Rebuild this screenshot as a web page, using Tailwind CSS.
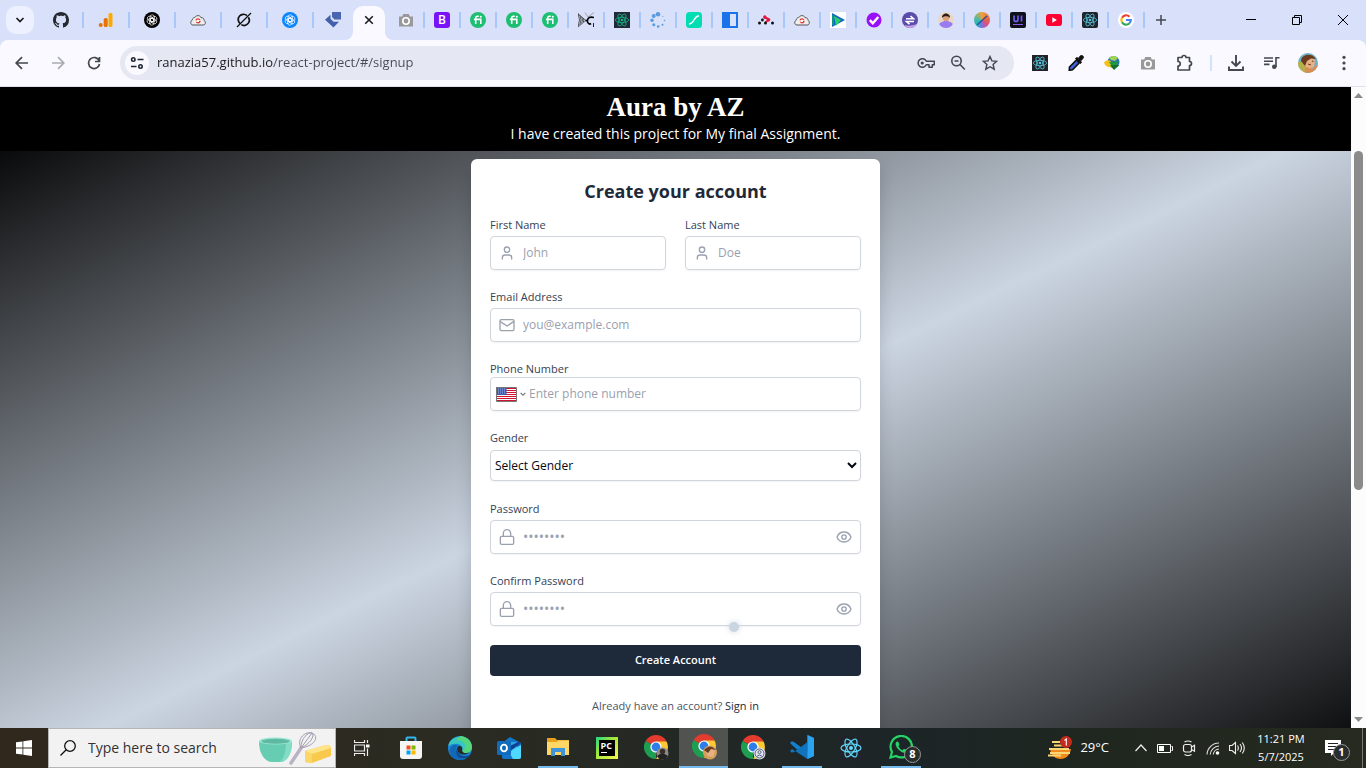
<!DOCTYPE html>
<html lang="en">
<head>
<meta charset="utf-8">
<title>Aura by AZ – Sign up</title>
<script src="https://cdn.jsdelivr.net/npm/@tailwindcss/browser@4"></script>
</head>
<body class="flex h-screen flex-col overflow-hidden bg-white font-['Open_Sans','Noto_Sans',sans-serif]">

<svg class="hidden" aria-hidden="true">
  <symbol id="react" viewBox="0 0 24 24"><g fill="none" stroke="currentColor" stroke-width="1.2"><ellipse cx="12" cy="12" rx="10" ry="4"/><ellipse cx="12" cy="12" rx="10" ry="4" transform="rotate(60 12 12)"/><ellipse cx="12" cy="12" rx="10" ry="4" transform="rotate(120 12 12)"/></g><circle cx="12" cy="12" r="2" fill="currentColor"/></symbol>
  <symbol id="fiverr" viewBox="0 0 16 16"><circle cx="8" cy="8" r="8" fill="#1dbf73"/><path d="M8.800 4.300H7.600C6.300 4.300 5.700 5 5.700 6.200V12M3.900 7.400h6.900V12" fill="none" stroke="#fff" stroke-width="1.600"/><circle cx="10.800" cy="4.700" r="1" fill="#fff"/></symbol>
  <symbol id="cloud" viewBox="0 0 16 16"><path d="M3 13C.3 13 .1 9.400 2 8.400 2.500 5.600 4.600 5.400 5 5.400 6 3 10.200 3 11 5.600c2-.2 3 1.200 3 2.800 2 1 1.800 4.600-.8 4.600z" fill="#eee" stroke="#555" stroke-width="1"/><circle cx="8" cy="8.800" r="2" fill="#fff" stroke="#e0362c" stroke-width="1.300" stroke-dasharray="4.500 1.500"/></symbol>
  <symbol id="camera" viewBox="0 0 16 16"><path d="M1 4.500h3.200L5.200 2h5.600l1 2.500H15V14.500H1z" fill="#999"/><circle cx="8" cy="9" r="3.200" fill="#999" stroke="#fff" stroke-width="1.600"/></symbol>
  <symbol id="openai" viewBox="0 0 16 16"><g fill="none" stroke="#fff" stroke-width=".7"><rect x="6" y="2.800" width="4.400" height="6.800" rx="2.200"/><rect x="6" y="2.800" width="4.400" height="6.800" rx="2.200" transform="rotate(60 8 8)"/><rect x="6" y="2.800" width="4.400" height="6.800" rx="2.200" transform="rotate(120 8 8)"/><rect x="6" y="2.800" width="4.400" height="6.800" rx="2.200" transform="rotate(180 8 8)"/><rect x="6" y="2.800" width="4.400" height="6.800" rx="2.200" transform="rotate(240 8 8)"/><rect x="6" y="2.800" width="4.400" height="6.800" rx="2.200" transform="rotate(300 8 8)"/></g></symbol>
  <symbol id="chrome" viewBox="0 0 24 24"><path d="M12 12 1.600 6A12 12 0 0 1 22.400 6z" fill="#e33b2e"/><path d="M12 12V24A12 12 0 0 1 1.600 6z" fill="#1e9e50"/><path d="M12 6.500h10.600A12 12 0 0 1 12 24l4.800-9z" fill="#fcc934"/><circle cx="12" cy="12" r="5.600" fill="#fff"/><circle cx="12" cy="12" r="4.400" fill="#2f7de9"/></symbol>
  <symbol id="user" viewBox="0 0 24 24"><path d="M19 21v-2a4 4 0 0 0-4-4H9a4 4 0 0 0-4 4v2" fill="none" stroke="currentColor" stroke-width="2" stroke-linecap="round"/><circle cx="12" cy="7" r="4" fill="none" stroke="currentColor" stroke-width="2"/></symbol>
  <symbol id="mail" viewBox="0 0 24 24"><g fill="none" stroke="currentColor" stroke-width="2" stroke-linejoin="round"><rect x="1.500" y="4" width="21" height="16.500" rx="2"/><path d="m1.500 6.500 10.500 7 10.500-7"/></g></symbol>
  <symbol id="lock" viewBox="0 0 24 24"><g fill="none" stroke="currentColor" stroke-width="2" stroke-linejoin="round"><rect x="2" y="11" width="20" height="12" rx="2"/><path d="M6.500 11V6.500a5.500 5.500 0 0 1 11 0V11"/></g></symbol>
  <symbol id="eye" viewBox="0 0 24 24"><g fill="none" stroke="currentColor" stroke-width="2"><path d="M1.500 12C3.500 7 7.500 4.500 12 4.500S20.500 7 22.500 12C20.500 17 16.500 19.500 12 19.500S3.500 17 1.500 12z"/><circle cx="12" cy="12" r="3.300"/></g></symbol>
</svg>

<!-- Tab strip -->
<div class="flex h-10 shrink-0 items-center bg-[#d9e0f9]">
  <button aria-label="Search tabs" class="ml-1.5 mr-[3px] flex size-7 items-center justify-center rounded-[10px] bg-[#edf0ff]"><svg class="size-3" viewBox="0 0 12 12"><path d="m2.500 4 3.500 3.500L9.500 4" fill="none" stroke="#1b1b1f" stroke-width="1.700"/></svg></button>
  <div class="flex h-full items-center">
    <button aria-label="GitHub" class="flex h-4 w-[47px] items-center justify-center border-r-2 border-[#a8c7fa] pl-0.5"><svg class="size-4" viewBox="0 0 16 16"><path fill="#24292f" d="M8 0C3.580 0 0 3.580 0 8c0 3.540 2.290 6.530 5.470 7.590.4.070.55-.17.55-.38 0-.19-.01-.82-.01-1.490-2.010.37-2.530-.49-2.690-.94-.09-.23-.48-.94-.82-1.130-.28-.15-.68-.52-.01-.53.63-.01 1.080.58 1.230.82.72 1.210 1.870.87 2.330.66.070-.52.280-.87.510-1.070-1.780-.2-3.640-.89-3.640-3.950 0-.87.310-1.590.82-2.150-.08-.2-.36-1.020.08-2.120 0 0 .67-.21 2.200.82.640-.18 1.320-.27 2-.27s1.360.09 2 .27c1.530-1.040 2.200-.82 2.200-.82.440 1.100.160 1.920.08 2.120.510.56.82 1.270.82 2.150 0 3.070-1.870 3.750-3.650 3.950.290.250.540.730.540 1.480 0 1.070-.01 1.930-.01 2.200 0 .210.150.460.550.380A8 8 0 0 0 16 8c0-4.420-3.580-8-8-8"/></svg></button>
    <button aria-label="Analytics" class="flex h-4 w-[46px] items-center justify-center border-r-2 border-[#a8c7fa]"><svg class="size-4" viewBox="0 0 16 16"><rect x="10.500" y="1" width="4" height="14" rx="1.600" fill="#f9ab00"/><rect x="5.700" y="6" width="4" height="9" rx="1.600" fill="#e8710a"/><circle cx="2.700" cy="13" r="2" fill="#e8710a"/></svg></button>
    <button aria-label="ChatGPT" class="flex h-4 w-[46px] items-center justify-center border-r-2 border-[#a8c7fa]"><svg class="size-4 rounded-full bg-black"><use href="#openai"/></svg></button>
    <button aria-label="Cloud convert" class="flex h-4 w-[46px] items-center justify-center border-r-2 border-[#a8c7fa]"><svg class="size-4"><use href="#cloud"/></svg></button>
    <button aria-label="Grok" class="flex h-4 w-[46px] items-center justify-center border-r-2 border-[#a8c7fa]"><svg class="size-4" viewBox="0 0 16 16"><g fill="none" stroke="#111" stroke-width="1.700"><path d="M4 11.500A5.200 5.200 0 0 1 11 3.600M12.300 5.200A5.200 5.200 0 0 1 5.300 12.600"/><path d="M1 15 15 1" stroke-width="1.200"/></g></svg></button>
    <button aria-label="AI chat" class="flex h-4 w-[46px] items-center justify-center border-r-2 border-[#a8c7fa]"><svg class="size-4 rounded-full bg-[#0a84ff]"><use href="#openai"/></svg></button>
    <button aria-label="Design tool" class="flex h-4 w-[39px] items-center justify-center pr-0.5"><svg class="size-4" viewBox="0 0 16 16"><path d="M7 0h9v7.500H9.500L7 5z" fill="#4a66b0"/><path d="M5.500 2.800v4l3 3h5.500L8.500 15.500 0 7.800z" fill="#4460ad"/></svg></button>
  </div>
  <div class="flex h-full items-end">
    <svg class="-ml-2 size-2" viewBox="0 0 8 8"><path d="M0 8A8 8 0 0 0 8 0V8z" fill="#faf9ff"/></svg>
    <button aria-label="Close active tab" class="flex h-[34px] w-8 items-center justify-center rounded-t-[10px] bg-[#faf9ff] pb-1.5"><svg class="size-2.5" viewBox="0 0 10 10"><path d="m1.200 1.200 7.600 7.600M8.800 1.200 1.200 8.800" stroke="#1b1b1f" stroke-width="1.600"/></svg></button>
    <svg class="-mr-2 size-2" viewBox="0 0 8 8"><path d="M8 8A8 8 0 0 1 0 0V8z" fill="#faf9ff"/></svg>
  </div>
  <div class="ml-1 flex h-full items-center">
    <button aria-label="Screenshot" class="flex h-4 w-9 items-center justify-center border-r-2 border-[#a8c7fa]"><svg class="size-4"><use href="#camera"/></svg></button>
    <button aria-label="Bootstrap" class="flex h-4 w-9 items-center justify-center border-r-2 border-[#a8c7fa]"><span class="flex size-4 items-center justify-center rounded-[3px] bg-[#7a12f9] text-xs font-semibold text-white">B</span></button>
    <button aria-label="Fiverr" class="flex h-4 w-9 items-center justify-center border-r-2 border-[#a8c7fa]"><svg class="size-4"><use href="#fiverr"/></svg></button>
    <button aria-label="Fiverr" class="flex h-4 w-9 items-center justify-center border-r-2 border-[#a8c7fa]"><svg class="size-4"><use href="#fiverr"/></svg></button>
    <button aria-label="Fiverr" class="flex h-4 w-9 items-center justify-center border-r-2 border-[#a8c7fa]"><svg class="size-4"><use href="#fiverr"/></svg></button>
    <button aria-label="Canvas" class="flex h-4 w-9 items-center justify-center border-r-2 border-[#a8c7fa]"><svg class="size-4" viewBox="0 0 16 16"><g fill="none" stroke="#333"><path d="M0 1q3 7 0 14M1.800 2.800q2.400 5.200 0 10.400M3.600 4.500q1.800 3.500 0 7M5.400 6q1 2 0 4" stroke-width=".8"/><path d="M0 2 8 8.500 0 15" stroke-width=".6"/><path d="M7 .5 10 5 16 .5" stroke="#888" stroke-width=".7"/><path d="M16 5.500c-4-1-6 0-6.500 2.500S11 13 13 11.500M16 11v4M7.500 8.500h2" stroke="#000" stroke-width="1.700"/></g></svg></button>
    <button aria-label="React" class="flex h-4 w-9 items-center justify-center border-r-2 border-[#a8c7fa]"><svg class="size-4 bg-[#242938] text-[#12b886]"><use href="#react"/></svg></button>
    <button aria-label="Loading" class="flex h-4 w-9 items-center justify-center border-r-2 border-[#a8c7fa]"><svg class="size-4" viewBox="0 0 16 16" fill="#5b9be0"><circle cx="8" cy="2.300" r="2.300"/><circle cx="3.700" cy="4" r="2"/><circle cx="2" cy="8.300" r="1.700"/><circle cx="3.800" cy="12.800" r="1.500"/><circle cx="8.200" cy="14.500" r="1.300"/><circle cx="12.500" cy="12.800" r="1"/><circle cx="14.500" cy="8.500" r=".8"/><circle cx="12.800" cy="4.300" r=".6"/></svg></button>
    <button aria-label="Lottie" class="flex h-4 w-9 items-center justify-center border-r-2 border-[#a8c7fa]"><svg class="size-4" viewBox="0 0 16 16"><rect width="16" height="16" rx="3.500" fill="#00ddb3"/><path d="M3.500 12C8 12 8 4 12.500 4" fill="none" stroke="#fff" stroke-width="1.500" stroke-linecap="round"/></svg></button>
    <button aria-label="Layout" class="flex h-4 w-9 items-center justify-center border-r-2 border-[#a8c7fa]"><svg class="size-4" viewBox="0 0 16 16"><path d="M0 0h16v16H0z" fill="#1a73e8"/><path d="M8 2h6v12H8z" fill="#d9e0f9"/></svg></button>
    <button aria-label="React Router" class="flex h-4 w-9 items-center justify-center border-r-2 border-[#a8c7fa]"><svg class="size-4" viewBox="0 0 16 16"><path d="M6 5.200 9.500 6.500 10 8.500 7.500 10" fill="none" stroke="#e8123c" stroke-width="2"/><circle cx="6.800" cy="5" r="1.700" fill="#e8123c"/><circle cx="10.600" cy="7.800" r="1.700" fill="#e8123c"/><g fill="#111"><circle cx="4.400" cy="8" r="1.400"/><circle cx="1.500" cy="11" r="1.500"/><circle cx="7.500" cy="11" r="1.500"/><circle cx="14.500" cy="11" r="1.500"/></g></svg></button>
    <button aria-label="Cloud convert" class="flex h-4 w-9 items-center justify-center border-r-2 border-[#a8c7fa]"><svg class="size-4"><use href="#cloud"/></svg></button>
    <button aria-label="Player" class="flex h-4 w-9 items-center justify-center border-r-2 border-[#a8c7fa]"><svg class="size-4" viewBox="0 0 16 16"><path d="M0 0h16v16H0z" fill="#fff"/><path d="m2 1 13 7L2 15z" fill="#1763c6"/><path d="m4 4 7 4-5 6z" fill="#25d366"/><path d="M3 3v10" stroke="#0d9488" stroke-width="2"/></svg></button>
    <button aria-label="Tasks" class="flex h-4 w-9 items-center justify-center border-r-2 border-[#a8c7fa]"><svg class="size-4" viewBox="0 0 16 16"><circle cx="8" cy="8" r="7.500" fill="#9810fa"/><path d="m3.800 8.200 3 3 5.500-6.200" fill="none" stroke="#fff" stroke-width="2.400"/></svg></button>
    <button aria-label="Converter" class="flex h-4 w-9 items-center justify-center border-r-2 border-[#a8c7fa]"><svg class="size-4" viewBox="0 0 16 16"><circle cx="8" cy="8" r="8" fill="#5b4bab"/><path d="M2 13A8 8 0 0 0 15 12Q8 15 2 13" fill="#c9a2e8"/><path d="M4 6.700h7.500L8.500 4M12 9.500H4.500l3 2.700" fill="none" stroke="#fff" stroke-width="1.600"/></svg></button>
    <button aria-label="Portfolio" class="flex h-4 w-9 items-center justify-center border-r-2 border-[#a8c7fa]"><svg class="size-4 rounded-full" viewBox="0 0 16 16"><path d="M0 0h16v16H0z" fill="#e8d8c8"/><path d="M0 16c0-5 4-7 8-7s8 2 8 7z" fill="#9b7cf0"/><circle cx="8" cy="5.800" r="3.400" fill="#d9a27c"/><path d="M4 6C3.500 0 12.500 0 12 6 11 3.500 5 3.500 4 6" fill="#2b1d18"/></svg></button>
    <button aria-label="Palette" class="flex h-4 w-9 items-center justify-center border-r-2 border-[#a8c7fa]"><span class="flex size-4 items-center justify-center rounded-full bg-[conic-gradient(#f0a03a,#e8604a_25%,#d8508a_38%,#7b6fe0_50%,#1db7c4_65%,#5bb89a_80%,#f0a03a)]"><svg class="size-3" viewBox="0 0 12 12"><path d="M1 11 11 2" stroke="#3b4a8a" stroke-width="1.300"/></svg></span></button>
    <button aria-label="UI kit" class="flex h-4 w-9 items-center justify-center border-r-2 border-[#a8c7fa]"><svg class="size-4" viewBox="0 0 16 16"><rect width="16" height="16" rx="2" fill="#101018"/><path d="M4 3.500v4q0 2 2 2t2-2v-4M11.500 3.500v6" fill="none" stroke="#6d5df0" stroke-width="1.700"/><path d="M3 12.500h10" stroke="#8a5cf0"/></svg></button>
    <button aria-label="YouTube" class="flex h-4 w-9 items-center justify-center border-r-2 border-[#a8c7fa]"><svg class="size-4" viewBox="0 0 16 16"><rect y="2" width="16" height="12" rx="3" fill="#ff0033"/><path d="m6.300 5.300 4.600 2.700-4.600 2.700z" fill="#fff"/></svg></button>
    <button aria-label="React" class="flex h-4 w-9 items-center justify-center border-r-2 border-[#a8c7fa]"><svg class="size-4 rounded-[2px] bg-[#20232a] text-[#58c4dc]"><use href="#react"/></svg></button>
    <button aria-label="Google" class="flex h-4 w-9 items-center justify-center border-r-2 border-[#a8c7fa]"><svg class="size-4" viewBox="0 0 16 16"><circle cx="8" cy="8" r="8" fill="#fff"/><g fill="none" stroke-width="2.200"><path d="M4 5.700A4.700 4.700 0 0 1 11.500 4.700" stroke="#ea4335"/><path d="M4 10.300a4.700 4.700 0 0 1 0-4.600" stroke="#fbbc04"/><path d="M11.200 11.500A4.700 4.700 0 0 1 4 10.300" stroke="#34a853"/><path d="M8 8h4.800a4.700 4.700 0 0 1-1.600 3.500" stroke="#4285f4"/></g></svg></button>
  </div>
  <button aria-label="New tab" class="flex w-8 items-center justify-center"><svg class="size-2.5" viewBox="0 0 10 10"><path d="M5 0v10M0 5h10" stroke="#44474f" stroke-width="1.500"/></svg></button>
  <div class="ml-auto flex">
    <button aria-label="Minimize" class="flex w-[46px] justify-center"><svg class="size-2.5" viewBox="0 0 10 10"><path d="M0 4.500h10" stroke="#000"/></svg></button>
    <button aria-label="Restore" class="flex w-[46px] justify-center"><svg class="size-2.5" viewBox="0 0 10 10"><path d="M.5 2.500h7v7h-7zM2.500 2.500v-2h7v7h-2" fill="none" stroke="#000"/></svg></button>
    <button aria-label="Close" class="flex w-[46px] justify-center"><svg class="size-2.5" viewBox="0 0 10 10"><path d="m0 0 10 10M10 0 0 10" stroke="#000"/></svg></button>
  </div>
</div>

<!-- Toolbar -->
<div class="shrink-0 bg-[#d9e0f9]">
<div class="flex h-[47px] items-center rounded-t-lg border-b border-[#dfe0ea] bg-[#faf9ff] px-1">
  <button aria-label="Back" class="flex w-9 justify-center"><svg class="size-3.5" viewBox="0 0 14 14"><path d="M13 7H1.500M7 1.200 1.200 7 7 12.800" fill="none" stroke="#44474f" stroke-width="1.700"/></svg></button>
  <button aria-label="Forward" class="flex w-9 justify-center"><svg class="size-3.5" viewBox="0 0 14 14"><path d="M1 7h11.500M7 1.200 12.800 7 7 12.800" fill="none" stroke="#a9abb3" stroke-width="1.700"/></svg></button>
  <button aria-label="Reload" class="flex w-9 justify-center"><svg class="size-3.5" viewBox="0 0 14 14"><path d="M12.200 5A5.500 5.500 0 1 0 12.500 8M12.500 1v4.500H8" fill="none" stroke="#44474f" stroke-width="1.700"/></svg></button>
  <div class="ml-2 flex h-[34px] min-w-0 flex-1 items-center rounded-full bg-[#e5e8f3] pl-[5px] pr-2">
    <button aria-label="Site information" class="flex size-6 items-center justify-center rounded-full bg-[#faf9ff]"><svg class="size-3.5" viewBox="0 0 14 14"><g fill="none" stroke="#1f2430" stroke-width="1.600"><circle cx="3.300" cy="3.500" r="1.700"/><path d="M7.500 3.500h6M1 10.500h5.500"/><circle cx="10.500" cy="10.500" r="1.700"/></g></svg></button>
    <input type="text" aria-label="Address" value="ranazia57.github.io/react-project/#/signup" class="ml-2 min-w-0 flex-1 bg-[linear-gradient(to_right,#1b1b1f_116px,#474a54_116px)] bg-clip-text text-[13px] text-transparent outline-none">
    <button aria-label="Passwords" class="flex w-8 justify-center"><svg class="h-3 w-[18px]" viewBox="0 0 18 12"><g fill="none" stroke="#44474f" stroke-width="1.500"><path d="M9.300 4.200A4.300 4.300 0 1 0 9.300 7.800H12v2.400h3.300V7.800h2V4.200z" stroke-linejoin="round"/></g><circle cx="5.200" cy="6" r="1.600" fill="#44474f"/></svg></button>
    <button aria-label="Zoom" class="flex w-8 justify-center"><svg class="size-4" viewBox="0 0 16 16"><g fill="none" stroke="#44474f" stroke-width="1.600"><circle cx="6.500" cy="6" r="4.700"/><path d="m10 9.500 4.800 5M4.500 6h4"/></g></svg></button>
    <button aria-label="Bookmark" class="flex w-8 justify-center"><svg class="size-4" viewBox="0 0 16 16"><path d="m8 1.500 1.900 4.400 4.800.4-3.600 3.200 1.100 4.700L8 11.700l-4.200 2.500 1.100-4.700L1.300 6.300l4.800-.4z" fill="none" stroke="#44474f" stroke-width="1.400"/></svg></button>
  </div>
  <div class="ml-2 flex items-center">
    <button aria-label="React developer tools" class="flex w-9 justify-center"><svg class="size-4 bg-[#20232a] text-[#58c4dc]"><use href="#react"/></svg></button>
    <button aria-label="Colour picker" class="flex w-9 justify-center"><svg class="size-4" viewBox="0 0 16 16"><path d="m8.500 5 2.800 2.800L4.500 14.800 1.300 15.300 1.500 12z" fill="#3c66e0" stroke="#111" stroke-width="1.700"/><path d="M7.500 3.500 9 2.500l1.300 1L12 1.200C14-.8 16.500 1.500 14.800 3.800L12.500 6l1 1.500-1.200 1z" fill="#111" stroke="#111"/></svg></button>
    <button aria-label="Download manager" class="flex w-9 justify-center"><svg class="size-4" viewBox="0 0 16 16"><circle cx="9.500" cy="7" r="6" fill="#2f6fb5"/><path d="M5 3c3-3 7-2 9 0l-3 3-4-1z" fill="#9fd356"/><path d="M0 7.500c2-2.500 5-3 7-1l1 5.500c-4 1-7-1-8-4.500" fill="#f2c21a"/><path d="m5 7 10-.5L9.500 14z" fill="#1c9a3d"/><path d="m6 10 4 5 5.500-5z" fill="#14702c"/></svg></button>
    <button aria-label="Screenshot" class="flex w-9 justify-center"><svg class="size-4"><use href="#camera"/></svg></button>
    <button aria-label="Extensions" class="flex w-9 justify-center"><svg class="size-[18px]" viewBox="0 0 18 18"><path d="M3 3.500H7a2 2 0 0 1 4 0H14.500V7.500a2 2 0 0 1 0 4V16H3v-4a2.200 2.200 0 0 0 0-4.500z" fill="none" stroke="#44474f" stroke-width="1.700" stroke-linejoin="round"/></svg></button>
    <span class="ml-2 mr-1.5 h-4 w-0.5 bg-[#d3e3fd]"></span>
    <button aria-label="Downloads" class="flex w-9 justify-center"><svg class="size-[18px]" viewBox="0 0 18 18"><path d="M9 1v10.500M4.500 7.500 9 12l4.500-4.500M2 12.500V16h14v-3.500" fill="none" stroke="#44474f" stroke-width="1.900"/></svg></button>
    <button aria-label="Media" class="flex w-9 justify-center"><svg class="size-4" viewBox="0 0 16 16"><path d="M0 3h9M0 6.200h9M0 9.400h5.500M12 12V2.800h3.500" fill="none" stroke="#44474f" stroke-width="1.600"/><circle cx="10.300" cy="11.700" r="2.300" fill="#44474f"/></svg></button>
    <button aria-label="Profile" class="flex w-9 justify-center"><svg class="size-5 rounded-full" viewBox="0 0 20 20"><path d="M0 0h20v20H0z" fill="#6fb1c7"/><path d="M0 9l6-1 6 12H0z" fill="#b7b04a"/><path d="M5 9c1-6 11-6 12-1l-1 6-6 3z" fill="#e8b184"/><path d="M3 8C3 1 14-1 18 6L13 5.500 9 8 7 13z" fill="#6b3b1f"/><path d="M8 14l6 2 6-5v9H6z" fill="#d88d52"/><path d="m10 11 3 1M14 8l1.500.5" stroke="#6b3b1f"/></svg></button>
    <button aria-label="Menu" class="flex w-9 justify-center"><svg class="size-4" viewBox="0 0 16 16" fill="#44474f"><circle cx="8" cy="2.300" r="1.600"/><circle cx="8" cy="8" r="1.600"/><circle cx="8" cy="13.700" r="1.600"/></svg></button>
  </div>
</div>
</div>

<!-- Page -->
<div class="flex min-h-0 flex-1">
  <div class="flex min-w-0 flex-1 flex-col">
    <header class="flex h-16 shrink-0 flex-col items-center bg-black pt-1 text-white">
      <h1 class="font-['Georgia','Liberation_Serif',serif] text-[27px] leading-8 font-bold">Aura by AZ</h1>
      <p class="text-sm leading-[22px]">I have created this project for My final Assignment.</p>
    </header>
    <main class="flex min-h-0 flex-1 items-start justify-center bg-[linear-gradient(to_bottom_right,#000,#cbd5e1,#000)] bg-[length:100%_658px] bg-[position:0_-31px] pt-2">
      <form class="flex w-full max-w-[409px] flex-col gap-[19px] rounded-md bg-white px-[19px] pt-[19px] pb-12 text-xs shadow-[0_8px_16px_rgba(0,0,0,0.15)]">
        <h2 class="-mb-[7px] text-center text-lg leading-[27px] font-bold text-gray-800">Create your account</h2>
        <div class="grid grid-cols-2 gap-[19px]">
          <div class="flex flex-col gap-[3px]">
            <label for="first" class="text-[11px] leading-4 font-medium text-gray-700">First Name</label>
            <div class="flex h-[34px] items-center gap-2 rounded border border-gray-300 px-2 text-gray-400 shadow-xs"><svg class="size-4 shrink-0"><use href="#user"/></svg><input id="first" type="text" placeholder="John" class="min-w-0 flex-1 outline-none placeholder:text-gray-400"></div>
          </div>
          <div class="flex flex-col gap-[3px]">
            <label for="last" class="text-[11px] leading-4 font-medium text-gray-700">Last Name</label>
            <div class="flex h-[34px] items-center gap-2 rounded border border-gray-300 px-2 text-gray-400 shadow-xs"><svg class="size-4 shrink-0"><use href="#user"/></svg><input id="last" type="text" placeholder="Doe" class="min-w-0 flex-1 outline-none placeholder:text-gray-400"></div>
          </div>
        </div>
        <div class="flex flex-col gap-[3px]">
          <label for="email" class="text-[11px] leading-4 font-medium text-gray-700">Email Address</label>
          <div class="flex h-[34px] items-center gap-2 rounded border border-gray-300 px-2 text-gray-400 shadow-xs"><svg class="size-4 shrink-0"><use href="#mail"/></svg><input id="email" type="email" placeholder="you@example.com" class="min-w-0 flex-1 outline-none placeholder:text-gray-400"></div>
        </div>
        <div class="flex flex-col">
          <label for="phone" class="text-[11px] leading-4 font-medium text-gray-700">Phone Number</label>
          <div class="flex h-[34px] items-center rounded border border-gray-300 px-[5px] text-gray-400 shadow-xs">
            <button type="button" aria-label="Country: United States" class="mr-[3px] flex items-center gap-[3px]">
              <svg class="h-[15px] w-[21px]" viewBox="0 0 21 15"><path d="M0 0h21v15H0z" fill="#fff"/><path d="M0 1.500h21M0 3.500h21M0 5.500h21M0 7.500h21M0 9.500h21M0 11.500h21M0 13.500h21" stroke="#d3142f"/><path d="M0 0h10.500v8H0z" fill="#3b5bb5"/><path d="M2 2h8M2 4h8M2 6h8" stroke="#c5d0ee" stroke-width=".8" stroke-dasharray=".9 1.100"/><path d="M.5.5h20v14H.5z" fill="none" stroke="#777"/></svg>
              <svg class="size-[6px]" viewBox="0 0 6 6"><path d="m.6 1.800 2.400 2.400 2.400-2.400" fill="none" stroke="#777" stroke-width="1.200"/></svg>
            </button>
            <input id="phone" type="tel" placeholder="Enter phone number" class="min-w-0 flex-1 outline-none placeholder:text-gray-400">
          </div>
        </div>
        <div class="flex flex-col gap-1">
          <label for="gender" class="text-[11px] leading-4 font-medium text-gray-700">Gender</label>
          <select id="gender" class="h-[31px] rounded border border-gray-300 bg-white text-[#030712] shadow-xs"><option>Select Gender</option><option>Female</option><option>Male</option></select>
        </div>
        <div class="mt-px flex flex-col gap-[3px]">
          <label for="pw" class="text-[11px] leading-4 font-medium text-gray-700">Password</label>
          <div class="flex h-[34px] items-center gap-2 rounded border border-gray-300 px-2 text-gray-400 shadow-xs"><svg class="size-4 shrink-0"><use href="#lock"/></svg><input id="pw" type="password" placeholder="••••••••" class="min-w-0 flex-1 text-sm outline-none placeholder:text-gray-400"><button type="button" aria-label="Show password"><svg class="size-4"><use href="#eye"/></svg></button></div>
        </div>
        <div class="relative flex flex-col gap-[3px]">
          <label for="pw2" class="text-[11px] leading-4 font-medium text-gray-700">Confirm Password</label>
          <div class="flex h-[34px] items-center gap-2 rounded border border-gray-300 px-2 text-gray-400 shadow-xs"><svg class="size-4 shrink-0"><use href="#lock"/></svg><input id="pw2" type="password" placeholder="••••••••" class="min-w-0 flex-1 text-sm outline-none placeholder:text-gray-400"><button type="button" aria-label="Show password"><svg class="size-4"><use href="#eye"/></svg></button></div>
          <!-- cursor follower dot -->
          <span class="absolute -bottom-1.5 left-[239px] size-2.5 rounded-full bg-slate-300 shadow-[0_0_6px_#cbd5e1]"></span>
        </div>
        <button type="submit" class="h-[31px] rounded bg-gray-800 text-[11px] font-semibold text-white">Create Account</button>
        <p class="mt-[3px] text-center text-[11px] leading-4 text-gray-600">Already have an account? <a href="#/signin" class="font-medium text-gray-800">Sign in</a></p>
      </form>
    </main>
  </div>
  <div class="flex w-[15px] shrink-0 flex-col items-center bg-[#fcfcfc] py-1.5">
    <svg class="h-[5px] w-[9px]" viewBox="0 0 9 5"><path d="M0 5 4.500 0 9 5z" fill="#8b8b8b"/></svg>
    <div class="mt-[53px] h-[339px] w-[9px] rounded-full bg-[#8b8b8b]"></div>
    <svg class="mt-auto h-[5px] w-[9px]" viewBox="0 0 9 5"><path d="M0 0 4.500 5 9 0z" fill="#8b8b8b"/></svg>
  </div>
</div>

<!-- Taskbar -->
<footer class="flex h-10 shrink-0 items-stretch bg-[linear-gradient(to_right,#30281d,#2a2b22_35%,#1c2527_66%,#20271f_82%,#262a1f)] text-white">
  <button aria-label="Start" class="flex w-12 items-center justify-center"><svg class="size-4" viewBox="0 0 16 16" fill="#fff"><path d="M0 2.300 6.500 1.400v6.200H0zM7.300 1.300 16 0v7.600H7.300zM0 8.400h6.500v6.200L0 13.700zM7.300 8.400H16V16l-8.700-1.300z"/></svg></button>
  <div class="mr-px flex w-72 items-center border border-[#b5b5b5] bg-[#f2f2f2] pl-[11px]">
    <svg class="size-4" viewBox="0 0 16 16"><circle cx="10" cy="6" r="5.300" fill="none" stroke="#111" stroke-width="1.300"/><path d="M6.200 9.800.5 15.500" stroke="#111" stroke-width="1.300"/></svg>
    <input type="text" aria-label="Search" placeholder="Type here to search" class="ml-3 min-w-0 flex-1 text-sm outline-none placeholder:text-[#333]">
    <svg class="mr-[3px] h-9 w-[74px]" viewBox="0 0 74 36"><path d="M1 12C1 24 7 32 14 32h8c7 0 12-8 12-20z" fill="#66cdb3"/><path d="M22 32c7 0 12-8 12-20h-6c0 9-2 16-6 20" fill="#84dcc6"/><ellipse cx="17.500" cy="11" rx="16.500" ry="3.600" fill="#98e6d2"/><ellipse cx="17.500" cy="11.300" rx="14" ry="2.500" fill="#5fb8a2"/><g fill="none" stroke="#a19bad"><path d="m33 33 10-15" stroke="#b8b2c4" stroke-width="3.500" stroke-linecap="round"/><path d="M43 18C38 8 48 1 54 3s6 12-11 15M43 18C43 8 50 2 54 3M43 18C52 14 57 6 54 3M43 18 54 3" stroke-width="1"/></g><path d="M47 21 68 15q5 0 5 3v8l-19 7-7-1z" fill="#f8c94c"/><path d="m47 21 21-6q5 0 5 3l-19 6z" fill="#ffe48a"/><path d="m47 21 7 3v9l-7-1z" fill="#fbd768"/></svg>
  </div>
  <button aria-label="Task view" class="flex w-[49px] items-center justify-center"><svg class="size-4" viewBox="0 0 16 16"><path d="M.5 0v2.500h10V0M.5 16v-2.500h10V16M.5 5h10v6H.5zM13.500 0v3M13.500 8.500V16" fill="none" stroke="#eee" stroke-width="1.200"/><path d="M12 4.500h3.500v3H12z" fill="#fff"/></svg></button>
  <button aria-label="Store" class="flex w-[49px] items-center justify-center"><svg class="size-6" viewBox="0 0 24 24"><path d="M7.500 7V2.500q0-1 1-1h7q1 0 1 1V7" fill="none" stroke="#35b5f0" stroke-width="2"/><path d="M1 5h22v15q0 3-3 3H4q-3 0-3-3z" fill="#f5f5f5"/><path d="M7.500 9.500h4v4h-4z" fill="#f25022"/><path d="M12.500 9.500h4v4h-4z" fill="#7fba00"/><path d="M7.500 14.500h4v4h-4z" fill="#00a4ef"/><path d="M12.500 14.500h4v4h-4z" fill="#ffb900"/></svg></button>
  <button aria-label="Edge" class="flex w-[49px] items-center justify-center"><svg class="size-6" viewBox="0 0 24 24"><circle cx="12" cy="12" r="12" fill="#1b87d6"/><path d="M.3 10C2-1 20-4 23.700 9c1 5-2 8-6 8-3 0-4.500-1.500-3.500-3.500C16 9 8 5 .3 10" fill="#38c6c0"/><path d="M12 0C19 0 24 5 24 11c0 4-3 6-6 6-2 0-4-.6-4-2 6-3 4-11-6-11z" fill="#5fd968" opacity=".75"/><path d="M10 9.500c-4 3-3 12 6 13.700C8 26 1 20 1.500 14 3 9 7 8 10 9.500" fill="#1268b8"/><path d="M10.500 10c-3 4 0 10 6 10 3 0 5-1 6-2-3 6-12 6-14 0-1-3 0-6 2-8" fill="#0d4a92"/><path d="M14.200 13.500c.5-3-2-4-3.700-3.500-2 1.500-1.500 5 .5 7 3 2 7 2.300 10.500-.5-4 1.500-8 .5-7.300-3" fill="#262a27"/></svg></button>
  <button aria-label="Outlook" class="flex w-[49px] items-center justify-center"><svg class="size-6" viewBox="0 0 24 24"><path d="m5 7 8-6 11 6v14q0 2-2 2H7q-2 0-2-2z" fill="#1375c9"/><path d="M7 6h13v8H7z" fill="#28a8ea"/><path d="m24 9-12 7 4 7h6q2 0 2-2z" fill="#50d9ff"/><path d="m24 7-11 8v-5l8-4z" fill="#123f92"/><rect y="5" width="14" height="14" rx="1.500" fill="#0f6cbd"/><ellipse cx="7" cy="12" rx="3" ry="3.400" fill="none" stroke="#fff" stroke-width="1.900"/></svg></button>
  <button aria-label="File Explorer" class="flex w-[49px] flex-col items-center"><span class="flex flex-1 items-center"><svg class="h-5 w-[22px]" viewBox="0 0 22 20"><path d="M0 1h8l2 2h12v6H0z" fill="#e8a11c"/><path d="M0 5h10l1-1.500h11V18H0z" fill="#ffd766"/><path d="M4 11h14v8h-4v-4H8v4H4z" fill="#3f93d6"/></svg></span><span class="h-0.5 w-10 bg-[#76b9ed]"></span></button>
  <button aria-label="PyCharm" class="flex w-[49px] items-center justify-center"><span class="flex size-[22px] items-center justify-center bg-[linear-gradient(135deg,#21d789,#9be83b_40%,#fcf84a)]"><span class="flex size-4 flex-col items-start bg-black pl-0.5"><span class="text-[9px] leading-[11px] font-bold">PC</span><span class="mt-px h-px w-1.5 bg-white"></span></span></span></button>
  <button aria-label="Chrome, profile 1" class="flex w-[49px] items-center justify-center"><svg class="size-[26px]" viewBox="0 0 26 26"><use href="#chrome" x="1" width="24" height="24"/><circle cx="19.500" cy="18.500" r="6" fill="#8b8b88"/><path d="M14 21q5-5 11 0l-3 3.500h-5z" fill="#222"/><circle cx="19.500" cy="16.500" r="2.700" fill="#3a2d28"/></svg></button>
  <button aria-label="Chrome, profile 2" class="-ml-px flex w-[49px] flex-col items-center bg-[#50534f]"><span class="flex flex-1 items-center"><svg class="size-[26px]" viewBox="0 0 26 26"><use href="#chrome" x="1" width="24" height="24"/><circle cx="19" cy="18.500" r="7" fill="#d3a05a"/><path d="M14 17q5-7 10 0l-2 6-5-1z" fill="#e8b184"/><path d="M13 16q6-7 12 0l-5-1-3 4z" fill="#6b3b1f"/></svg></span><span class="h-0.5 w-full bg-[#76b9ed]"></span></button>
  <button aria-label="Chrome, guest" class="flex w-[49px] items-center justify-center"><svg class="size-[26px]" viewBox="0 0 26 26"><use href="#chrome" x="1" width="24" height="24"/><circle cx="19.500" cy="18.500" r="6" fill="#dfe3ee"/><g fill="none" stroke="#5b6480"><circle cx="19.500" cy="18.500" r="4.500"/><circle cx="19.500" cy="17.200" r="1.500"/><path d="M16.500 21.500q3-3 6 0"/></g></svg></button>
  <button aria-label="Visual Studio Code" class="flex w-[49px] flex-col items-center"><span class="flex flex-1 items-center"><svg class="size-6" viewBox="0 0 24 24"><path d="M17.500 0 24 3v18l-6.500 3L2 10 0 8l1.800-1.700L4 7l13.500 10z" fill="#1380cf"/><path d="M17.500 24 2 14 0 16l1.800 1.700L4 17 17.500 7z" fill="#0f73bd"/><path d="M17.500 0 24 3v18l-6.500 3z" fill="#2ba3ee"/></svg></span><span class="h-0.5 w-10 bg-[#76b9ed]"></span></button>
  <button aria-label="React app" class="flex w-[49px] items-center justify-center"><svg class="size-6 bg-[#20232a] text-[#61dafb]"><use href="#react"/></svg></button>
  <button aria-label="WhatsApp" class="relative ml-px flex w-[49px] flex-col items-center"><span class="flex flex-1 items-center"><svg class="size-6" viewBox="0 0 24 24"><path d="M1.500 22.500 3 17A10.700 10.700 0 1 1 7 21z" fill="none" stroke="#25d366" stroke-width="2.200"/><path d="M8 6.500c-3 2-.5 6 2 8.500s6 4 7.500 1.500c.8-1.300 0-1.700-2.500-2.800l-1.500 1.600q-3-1-4.200-4.200L10.500 10c-.8-3-1.500-4-2.500-3.500" fill="#25d366"/></svg></span><span class="h-0.5 w-10 bg-[#76b9ed]"></span><span class="absolute top-[18px] left-7 flex size-[17px] items-center justify-center rounded-full border border-[#999] bg-[#2a2d2d] text-[11px] font-bold">8</span></button>

  <div class="ml-auto flex items-center">
    <button class="mr-5 flex items-center gap-2 text-[13px]"><svg class="size-6" viewBox="0 0 24 24"><path d="M2 13h21c-1 6-5 10-10.500 10S3 19 2 13" fill="#f08a1c"/><path d="M4 6h8M6 9.500h9M1 13h20M2 17h20M0 19.500h13" stroke="#fbd674" stroke-width="1.800"/><circle cx="18" cy="6" r="6" fill="#c42b1c"/><path d="M16.500 4.500 18.300 3v6.500" fill="none" stroke="#fff" stroke-width="1.100"/></svg>29°C</button>
    <button aria-label="Show hidden icons" class="flex w-6 justify-center"><svg class="size-3" viewBox="0 0 12 12"><path d="m.5 9 5.500-6 5.500 6" fill="none" stroke="#eee" stroke-width="1.200"/></svg></button>
    <button aria-label="Battery" class="flex w-6 justify-center"><svg class="h-[9px] w-4" viewBox="0 0 16 9"><path d="M.5.500h13v8H.5zM14.500 2.500h1v4h-1" fill="none" stroke="#fff"/><path d="M2 2h5v5H2z" fill="#fff"/></svg></button>
    <button aria-label="Meet now" class="flex w-6 justify-center"><svg class="size-4" viewBox="0 0 16 16"><g fill="none" stroke="#eee" stroke-width="1.200"><rect x="2.500" y="4.500" width="8" height="7.500" rx="2"/><path d="m10.500 7 3-1.700v6l-3-1.700M3.500 2Q7 0 10.500 2M3.500 14.500q3.500 2 7 0"/></g></svg></button>
    <button aria-label="Network" class="flex w-6 justify-center"><svg class="size-3.5" viewBox="0 0 14 14"><g fill="none" stroke="#ddd" stroke-width="1.100"><path d="M1 13.500A12 12 0 0 1 13 2M4.300 13.500A9 9 0 0 1 13 5M7.300 13.500A6 6 0 0 1 13 8"/></g><circle cx="11.500" cy="12" r="1.800" fill="#fff"/></svg></button>
    <button aria-label="Volume" class="flex w-6 justify-center"><svg class="size-4" viewBox="0 0 16 16"><g fill="none" stroke="#eee" stroke-width="1.100"><path d="M.5 5.500H3l3.500-3v11L3 10.500H.5zM8.500 5.500q1.700 2.500 0 5M11 4q3 4 0 8M13.300 2.500q4 5.500 0 11"/></g></svg></button>
    <div class="flex w-16 flex-col text-center text-[11px] leading-[18px] whitespace-nowrap"><span>11:21 PM</span><span>5/7/2025</span></div>
    <button aria-label="Notifications" class="relative mr-1.5 flex w-[43px] justify-center pr-1"><svg class="size-4" viewBox="0 0 16 16"><path d="M0 0h16v13H9l-3 3v-3H0z" fill="#fff"/><path d="M3 3.500h10M3 6.500h10M3 9.500h7" stroke="#222"/></svg><span class="absolute top-1 left-5 flex size-[17px] items-center justify-center rounded-full border border-[#999] bg-[#2a2d2d] text-[11px] font-bold">1</span></button>
    <button aria-label="Show desktop" class="h-10 w-1 border-l border-[#777]"></button>
  </div>
</footer>
</body>
</html>
